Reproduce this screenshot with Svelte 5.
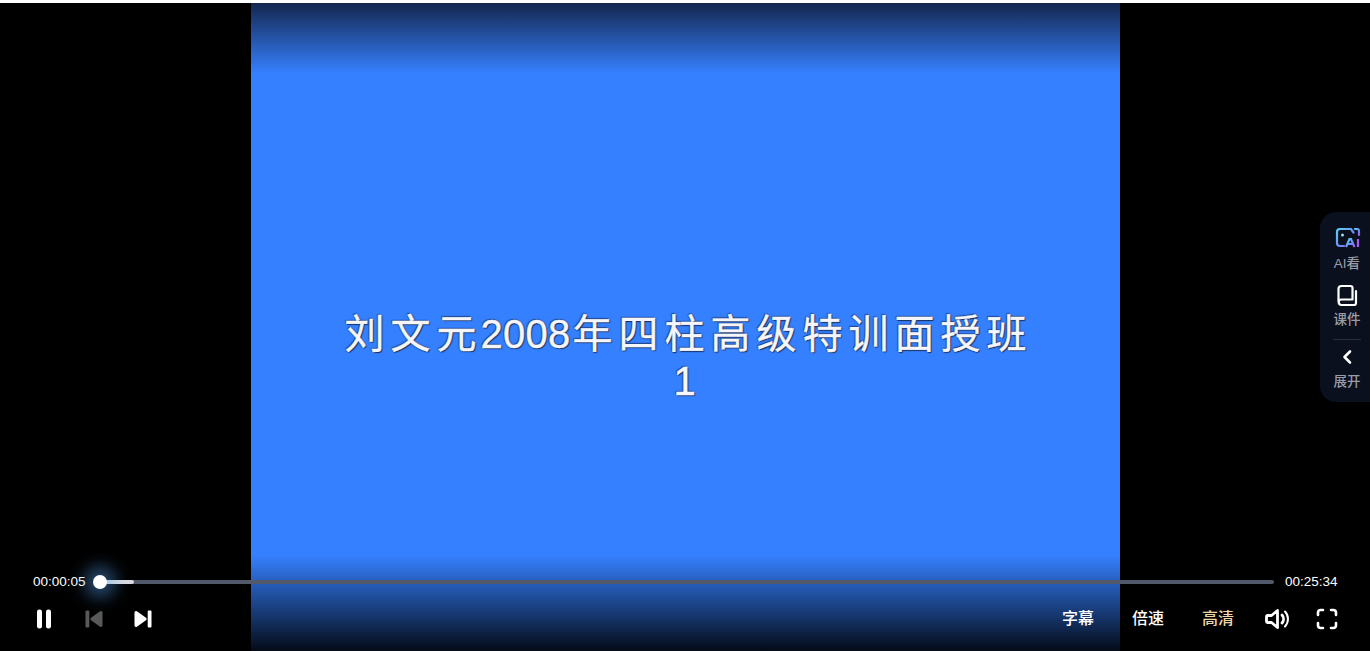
<script>
	let current = "00:00:05";
	let total = "00:25:34";
	let played = 2.9;
	let options = [
		{ label: "字幕", active: false },
		{ label: "倍速", active: false },
		{ label: "高清", active: true }
	];
</script>

<main class="player">
	<div class="video">
		<div class="title">
			<div>刘文元<span class="digits">2008</span>年四柱高级特训面授班</div>
			<div class="last-line">1</div>
		</div>
		<div class="shade-top"></div>
		<div class="shade-bottom"></div>
	</div>

	<aside class="side">
		<button class="side-item">
			<svg class="ai-icon" width="26" height="24" viewBox="0 0 26 24" fill="none">
				<defs>
					<linearGradient id="ai" x1="0" y1="0" x2="1" y2="1">
						<stop offset="0" stop-color="#5ad0f5" />
						<stop offset="0.6" stop-color="#6f8cf8" />
						<stop offset="1" stop-color="#a45cf5" />
					</linearGradient>
				</defs>
				<path d="M9 20H5a3 3 0 0 1-3-3V6a3 3 0 0 1 3-3h11l2.500 3.500" stroke="url(#ai)" stroke-width="2.200" stroke-linecap="round" />
				<path d="M20 3h2a2 2 0 0 1 2 2v4" stroke="url(#ai)" stroke-width="2.200" stroke-linecap="round" />
				<circle cx="7.500" cy="9" r="1.500" fill="#8fe0f8" />
				<path d="M11 21l3.500-8h1.500l3.500 8M13 18h5" stroke="url(#ai)" stroke-width="2.200" />
				<path d="M23 13v8" stroke="#a45cf5" stroke-width="2.200" />
			</svg>
			<span>AI看</span>
		</button>
		<button class="side-item book">
			<svg width="24" height="24" viewBox="0 0 24 24" fill="none" stroke="#fff" stroke-width="2.200" stroke-linecap="round" stroke-linejoin="round">
				<path d="M3.500 17.500V5a3 3 0 0 1 3-3h9a2 2 0 0 1 2 2V15.500H6a2.800 2.800 0 0 0 0 5.500h13a2 2 0 0 0 2-2V7" />
			</svg>
			<span>课件</span>
		</button>
		<div class="side-line"></div>
		<button class="side-item expand">
			<svg width="24" height="20" viewBox="0 0 24 20" fill="none" stroke="#fff" stroke-width="2.600" stroke-linecap="round" stroke-linejoin="round">
				<path d="M15 4.500l-5.500 5.500 5.500 5.500" />
			</svg>
			<span>展开</span>
		</button>
	</aside>

	<div class="controls">
		<div class="progress-row">
			<span class="time">{current}</span>
			<div class="track">
				<div class="played" style="width: {played}%"></div>
				<div class="thumb"></div>
			</div>
			<span class="time end">{total}</span>
		</div>
		<div class="button-row">
			<div class="left-btns">
				<svg width="20" height="22" viewBox="0 0 20 22" fill="#fff">
					<rect x="3" y="1.500" width="5" height="19" rx="2.200" />
					<rect x="12" y="1.500" width="5" height="19" rx="2.200" />
				</svg>
				<svg class="dim" width="20" height="20" viewBox="0 0 20 20" fill="#fff">
					<rect x="1.500" y="1.500" width="3.800" height="17" rx="1" />
					<path d="M18.500 3.500v13a1.500 1.500 0 0 1-2.400 1.200L7 11.200a1.500 1.500 0 0 1 0-2.400l9.100-6.500a1.500 1.500 0 0 1 2.400 1.200z" />
				</svg>
				<svg class="next" width="20" height="20" viewBox="0 0 20 20" fill="#fff">
					<rect x="14.700" y="1.500" width="3.800" height="17" rx="1" />
					<path d="M1.500 3.500v13a1.500 1.500 0 0 0 2.400 1.200l9.100-6.500a1.500 1.500 0 0 0 0-2.400L3.900 2.300a1.500 1.500 0 0 0-2.400 1.200z" />
				</svg>
			</div>
			<div class="right-btns">
				{#each options as opt}
					<button class="opt" class:active={opt.active}>{opt.label}</button>
				{/each}
				<svg class="volume" width="26" height="24" viewBox="0 0 26 24" fill="none" stroke="#fff" stroke-width="2.800" stroke-linecap="round" stroke-linejoin="round">
					<path d="M2.500 9.500v5a1 1 0 0 0 1 1h4l6 5V3.500l-6 5h-4a1 1 0 0 0-1 1z" />
					<path d="M18 8a6 6 0 0 1 0 8" />
					<path d="M21 4.500a11 11 0 0 1 0 15" stroke-width="2" />
				</svg>
				<svg class="full" width="24" height="24" viewBox="0 0 24 24" fill="none" stroke="#fff" stroke-width="2.600" stroke-linecap="round" stroke-linejoin="round">
					<path d="M3 8V5.500a2.500 2.500 0 0 1 2.500-2.500h2.500" />
					<path d="M16 3h2.500A2.500 2.500 0 0 1 21 5.500V8" />
					<path d="M21 16v2.500a2.500 2.500 0 0 1-2.500 2.500H16" />
					<path d="M8 21H5.500A2.500 2.500 0 0 1 3 18.500V16" />
				</svg>
			</div>
		</div>
	</div>
</main>

<style>
	:global(body) {
		margin: 0;
		background: #fff;
		overflow: hidden;
	}

	.player {
		position: relative;
		margin-top: 3px;
		height: 648px;
		background: #000;
		display: flex;
		justify-content: center;
		overflow: hidden;
		font-family: "Liberation Sans", "Noto Sans CJK SC", sans-serif;
	}

	.video {
		position: relative;
		width: 869px;
		margin-left: 1px;
		background: #3580ff;
		display: flex;
		align-items: center;
		justify-content: center;
	}

	.title {
		color: #f4f6fb;
		font-size: 40px;
		line-height: 47px;
		letter-spacing: 6px;
		text-align: center;
		margin-top: 61px;
		margin-left: 6px;
		-webkit-text-stroke: 0.4px #f4f6fb;
		text-shadow: 0 0 2px #1c2f5c, 1px 1px 1px #1c2f5c, -1px -1px 1px rgba(28, 47, 92, 0.6);
	}

	.digits {
		letter-spacing: 0.3px;
		margin: 0 2px 0 -2px;
	}

	.last-line {
		letter-spacing: 0;
		margin-left: -8px;
	}

	.shade-top,
	.shade-bottom {
		position: absolute;
		left: 0;
		right: 0;
	}

	.shade-top {
		top: 0;
		height: 70px;
		background: linear-gradient(to bottom, #14274f, #3580ff);
	}

	.shade-bottom {
		bottom: 0;
		height: 96px;
		background: linear-gradient(to top, #040b18, #3580ff);
	}

	.side {
		position: absolute;
		right: 0;
		top: 209px;
		width: 50px;
		height: 190px;
		box-sizing: border-box;
		padding: 16px 0 0 4px;
		background: #0a101e;
		border-radius: 16px 0 0 16px;
		display: flex;
		flex-direction: column;
		align-items: center;
	}

	.side-item {
		background: none;
		border: none;
		padding: 0;
		display: flex;
		flex-direction: column;
		align-items: center;
		font-family: inherit;
		color: #9a9da6;
		font-size: 13.5px;
		font-weight: 500;
		line-height: 18px;
		height: 46px;
		gap: 2px;
		white-space: nowrap;
	}

	.ai-icon {
		margin: -2px 0 3px 1px;
	}

	.side-item.book {
		height: 55px;
		margin-top: 10px;
	}

	.side-item.expand {
		height: 44px;
		margin-top: 7px;
	}

	.side-line {
		width: 28px;
		height: 1px;
		background: #2a2f3b;
		flex-shrink: 0;
	}

	.side-item.book span {
		margin-top: 1px;
	}

	.side-item.expand span {
		margin-top: 4px;
	}

	.controls {
		position: absolute;
		left: 0;
		right: 0;
		bottom: 2px;
		padding: 0 32px 0 33px;
	}

	.progress-row {
		display: flex;
		align-items: center;
		height: 20px;
		position: relative;
		top: -1px;
	}

	.time {
		color: #fff;
		font-size: 13.5px;
		line-height: 20px;
		width: 53px;
		flex-shrink: 0;
		white-space: nowrap;
	}

	.time.end {
		margin-left: 12px;
	}

	.track {
		position: relative;
		flex: 1;
		height: 4px;
		background: #51596a;
		border-radius: 2px;
		margin-left: 14px;
		margin-right: -1px;
	}

	.played {
		height: 100%;
		background: #d9dadd;
		border-radius: 2px;
	}

	.thumb {
		position: absolute;
		left: -7px;
		top: -5px;
		width: 14px;
		height: 14px;
		border-radius: 50%;
		background: #fff;
		box-shadow: 0 0 16px 9px rgba(90, 170, 255, 0.42);
	}

	.button-row {
		display: flex;
		justify-content: space-between;
		align-items: center;
		padding-top: 8px;
		padding-bottom: 12px;
		box-sizing: border-box;
		height: 56px;
	}

	.left-btns {
		display: flex;
		align-items: center;
		gap: 30px;
		margin-left: 1px;
	}

	.dim {
		opacity: 0.35;
	}

	.next {
		margin-left: -1px;
	}

	.right-btns {
		display: flex;
		align-items: center;
	}

	.opt {
		background: none;
		border: none;
		padding: 0;
		width: 34px;
		margin-right: 36px;
		font-family: inherit;
		font-size: 16px;
		font-weight: 500;
		line-height: 22px;
		color: #fff;
		white-space: nowrap;
	}

	.opt.active {
		color: #f0d5a8;
		margin-right: 29px;
	}

	.volume {
		margin-right: 25px;
	}

	.full {
		margin-right: -1px;
	}
</style>
